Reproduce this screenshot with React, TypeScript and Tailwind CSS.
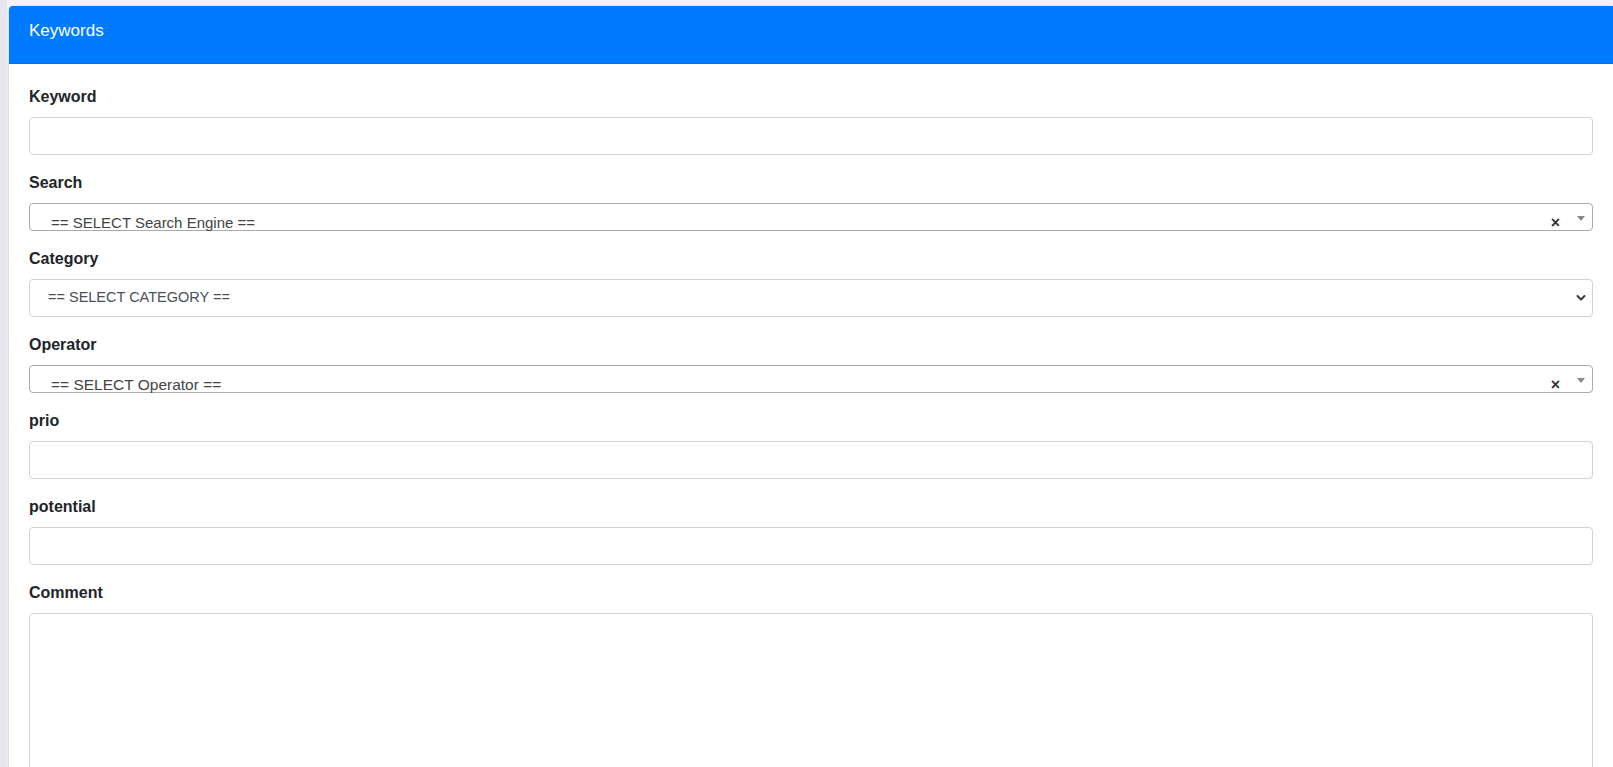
import React from 'react';

const font = { fontFamily: '"Liberation Sans", Arial, sans-serif' };

function Label({ children }: { children: React.ReactNode }) {
  return <label className="block text-[16px] font-bold leading-[24px] mb-2 text-[#212529]">{children}</label>;
}

function TextInput() {
  return (
    <input
      type="text"
      className="block w-full h-[38px] rounded-[4px] border border-[#ced4da] bg-white px-3 text-[16px] text-[#495057] outline-none"
    />
  );
}

function Select2Box({ text, size }: { text: string; size: string }) {
  return (
    <div className="relative h-[28px] rounded-[4px] border border-[#aaa] bg-white">
      <div className="flex items-baseline justify-between pt-[10px] pl-[21px] pr-[32px] leading-[17px]">
        <span className={size + ' text-[#444]'}>{text}</span>
        <span className="text-[16px] font-bold text-[#333]">×</span>
      </div>
      <div className="absolute right-[1px] top-[1px] w-[20px] h-[26px] flex items-center justify-center">
        <span className="block w-0 h-0 border-l-[4px] border-r-[4px] border-t-[5px] border-l-transparent border-r-transparent border-t-[#888]" />
      </div>
    </div>
  );
}

function CustomSelect({ text }: { text: string }) {
  return (
    <div className="relative h-[38px] rounded-[4px] border border-[#ced4da] bg-white flex items-center pl-[18px]">
      <span className="text-[14.5px] text-[#495057]">{text}</span>
      <svg className="absolute right-[6px] top-1/2 -translate-y-1/2" width="10" height="7" viewBox="0 0 10 7">
        <path d="M1.5 1.5L5 5l3.5-3.5" fill="none" stroke="#343a40" strokeWidth="2" strokeLinecap="round" strokeLinejoin="round" />
      </svg>
    </div>
  );
}

export default function App() {
  return (
    <div className="h-[767px] overflow-hidden flex bg-[#f2f3f6]" style={font}>
      <div className="w-[7px] shrink-0 bg-[#e6e7ec]" />
      <div className="flex-1 pl-[2px] pt-[6px]">
        <div className="bg-white rounded-tl-[4px] shadow-[0_0_1px_rgba(0,0,0,0.125),0_1px_3px_rgba(0,0,0,0.2)]">
          {/* Header */}
          <div className="h-[58px] bg-[#007bff] border-b border-black/10 rounded-tl-[4px] pl-[20px] pt-[12px]">
            <h3 className="text-[17px] leading-[25px] text-white font-normal">Keywords</h3>
          </div>

          {/* Body */}
          <div className="px-[20px] pt-[21px]">
            <div className="mb-4">
              <Label>Keyword</Label>
              <TextInput />
            </div>
            <div className="mb-4">
              <Label>Search</Label>
              <Select2Box text="== SELECT Search Engine ==" size="text-[15px]" />
            </div>
            <div className="mb-4">
              <Label>Category</Label>
              <CustomSelect text="== SELECT CATEGORY ==" />
            </div>
            <div className="mb-4">
              <Label>Operator</Label>
              <Select2Box text="== SELECT Operator ==" size="text-[15.5px]" />
            </div>
            <div className="mb-4">
              <Label>prio</Label>
              <TextInput />
            </div>
            <div className="mb-4">
              <Label>potential</Label>
              <TextInput />
            </div>
            <div className="mb-4">
              <Label>Comment</Label>
              <textarea className="block w-full h-[220px] rounded-[4px] border border-[#ced4da] bg-white px-3 py-2 text-[16px] text-[#495057] outline-none resize-none" />
            </div>
          </div>
        </div>
      </div>
    </div>
  );
}
